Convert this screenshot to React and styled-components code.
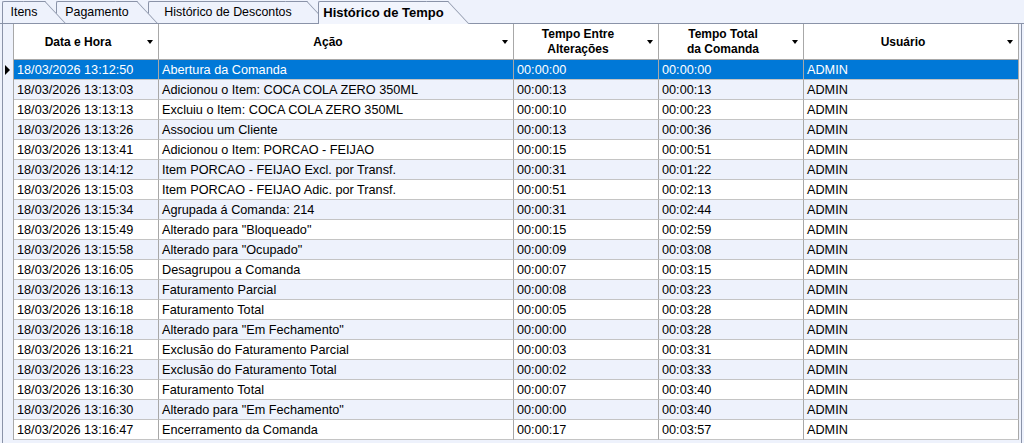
import styled, { createGlobalStyle } from "styled-components";

const GlobalStyle = createGlobalStyle`
  html, body {
    margin: 0;
    padding: 0;
    background: #eef2fc;
  }
  body {
    font-family: "Liberation Sans", Arial, sans-serif;
    color: #000;
  }
`;

const tabs = [
  { label: "Itens", width: 43 },
  { label: "Pagamento", width: 81 },
  { label: "Histórico de Descontos", width: 159 },
  { label: "Histórico de Tempo", width: 130, active: true },
];

const columns = [
  { title: ["Data e Hora"], width: 145 },
  { title: ["Ação"], width: 355 },
  { title: ["Tempo Entre", "Alterações"], width: 145 },
  { title: ["Tempo Total", "da Comanda"], width: 145 },
  { title: ["Usuário"], width: 215 },
];

const rows = [
  ["13:12:50", "Abertura da Comanda", "00:00:00", "00:00:00"],
  ["13:13:03", "Adicionou o Item: COCA COLA ZERO 350ML", "00:00:13", "00:00:13"],
  ["13:13:13", "Excluiu o Item: COCA COLA ZERO 350ML", "00:00:10", "00:00:23"],
  ["13:13:26", "Associou um Cliente", "00:00:13", "00:00:36"],
  ["13:13:41", "Adicionou o Item: PORCAO - FEIJAO", "00:00:15", "00:00:51"],
  ["13:14:12", "Item PORCAO - FEIJAO Excl. por Transf.", "00:00:31", "00:01:22"],
  ["13:15:03", "Item PORCAO - FEIJAO Adic. por Transf.", "00:00:51", "00:02:13"],
  ["13:15:34", "Agrupada á Comanda: 214", "00:00:31", "00:02:44"],
  ["13:15:49", 'Alterado para "Bloqueado"', "00:00:15", "00:02:59"],
  ["13:15:58", 'Alterado para "Ocupado"', "00:00:09", "00:03:08"],
  ["13:16:05", "Desagrupou a Comanda", "00:00:07", "00:03:15"],
  ["13:16:13", "Faturamento Parcial", "00:00:08", "00:03:23"],
  ["13:16:18", "Faturamento Total", "00:00:05", "00:03:28"],
  ["13:16:18", 'Alterado para "Em Fechamento"', "00:00:00", "00:03:28"],
  ["13:16:21", "Exclusão do Faturamento Parcial", "00:00:03", "00:03:31"],
  ["13:16:23", "Exclusão do Faturamento Total", "00:00:02", "00:03:33"],
  ["13:16:30", "Faturamento Total", "00:00:07", "00:03:40"],
  ["13:16:30", 'Alterado para "Em Fechamento"', "00:00:00", "00:03:40"],
  ["13:16:47", "Encerramento da Comanda", "00:00:17", "00:03:57"],
];

export default function App() {
  return (
    <>
      <GlobalStyle />
      <Window>
        <TabStrip>
          {tabs.map((tab, i) => (
            <Tab
              key={tab.label}
              $width={tab.width}
              $active={tab.active}
              $z={tab.active ? 20 : 10 - i}
            >
              {tab.label}
            </Tab>
          ))}
        </TabStrip>
        <Frame>
          <Grid>
            <Indicator />
            {columns.map((col) => (
              <HeadCell key={col.title.join()}>
                <HeadLabel>
                  {col.title.map((line) => (
                    <span key={line}>{line}</span>
                  ))}
                </HeadLabel>
                <SortArrow />
              </HeadCell>
            ))}
            {rows.map((row, i) => {
              const selected = i === 0;
              const cells = [`18/03/2026 ${row[0]}`, row[1], row[2], row[3], "ADMIN"];
              return [
                <Indicator key={`ind${i}`}>{selected && <Pointer />}</Indicator>,
                ...cells.map((text, c) => (
                  <Cell key={`${i}-${c}`} $selected={selected} $alt={i % 2 === 1}>
                    {text}
                  </Cell>
                )),
              ];
            })}
          </Grid>
        </Frame>
      </Window>
    </>
  );
}

const Window = styled.div`
  width: 1024px;
  height: 443px;
  overflow: hidden;
  background: #eef2fc;
`;

const TabStrip = styled.div`
  display: flex;
  align-items: flex-end;
  height: 23px;
  padding-left: 2px;
  border-bottom: 1px solid #8a93a8;
  gap: 11px;
`;

const Tab = styled.div`
  position: relative;
  z-index: ${(p) => p.$z};
  box-sizing: border-box;
  width: ${(p) => p.$width}px;
  height: ${(p) => (p.$active ? 23 : 22)}px;
  margin-bottom: ${(p) => (p.$active ? -1 : 0)}px;
  border-top: 1px solid #8a93a8;
  border-left: 1px solid #8a93a8;
  border-top-left-radius: 2px;
  background: ${(p) => (p.$active ? "#f2f5fd" : "#eef2fc")};
  font-size: ${(p) => (p.$active ? "13px" : "12.4px")};
  font-weight: ${(p) => (p.$active ? 700 : 400)};
  line-height: 21px;
  text-align: center;
  white-space: nowrap;

  &::after {
    content: "";
    position: absolute;
    z-index: -1;
    top: -1px;
    bottom: 0;
    left: calc(100% - 22px);
    width: 22px;
    box-sizing: border-box;
    background: inherit;
    border-top: 1px solid #8a93a8;
    border-right: 1px solid #8a93a8;
    transform: skewX(43deg);
    transform-origin: top left;
  }
`;

const Frame = styled.div`
  margin-left: 2px;
  width: 1017px;
  height: 419px;
  border-left: 1px solid #8a93a8;
  border-right: 1px solid #8a93a8;
  padding-right: 1px;
  overflow: hidden;
`;

const Grid = styled.div`
  display: grid;
  grid-template-columns: 11px ${columns.map((c) => `${c.width}px`).join(" ")};
  grid-template-rows: 36px;
  grid-auto-rows: 20px;
`;

const Indicator = styled.div`
  box-sizing: border-box;
  display: flex;
  align-items: center;
  padding-left: 2px;
  border-right: 1px solid #a8a8a8;
  background: #eef2fc;
`;

const Pointer = styled.span`
  width: 0;
  height: 0;
  border-top: 5px solid transparent;
  border-bottom: 5px solid transparent;
  border-left: 5px solid #000;
`;

const HeadCell = styled.div`
  box-sizing: border-box;
  display: flex;
  align-items: center;
  padding-top: 1px;
  background: #fff;
  border-right: 1px solid #a8a8a8;
  border-bottom: 1px solid #a8a8a8;
  font-size: 12px;
  font-weight: 700;
  line-height: 15px;
`;

const HeadLabel = styled.div`
  flex: 1;
  display: flex;
  flex-direction: column;
  align-items: center;
  text-align: center;
`;

const SortArrow = styled.span`
  width: 0;
  height: 0;
  margin: 0 5px;
  border-left: 3.5px solid transparent;
  border-right: 3.5px solid transparent;
  border-top: 4px solid #000;
`;

const Cell = styled.div`
  box-sizing: border-box;
  padding-left: 3px;
  border-right: 1px solid #a8a8a8;
  border-bottom: 1px solid #c4c4c4;
  background: ${(p) => (p.$selected ? "#0078d7" : p.$alt ? "#eef2fc" : "#fff")};
  color: ${(p) => (p.$selected ? "#fff" : "#000")};
  font-size: 12.7px;
  line-height: 20px;
  white-space: nowrap;
  overflow: hidden;
`;
